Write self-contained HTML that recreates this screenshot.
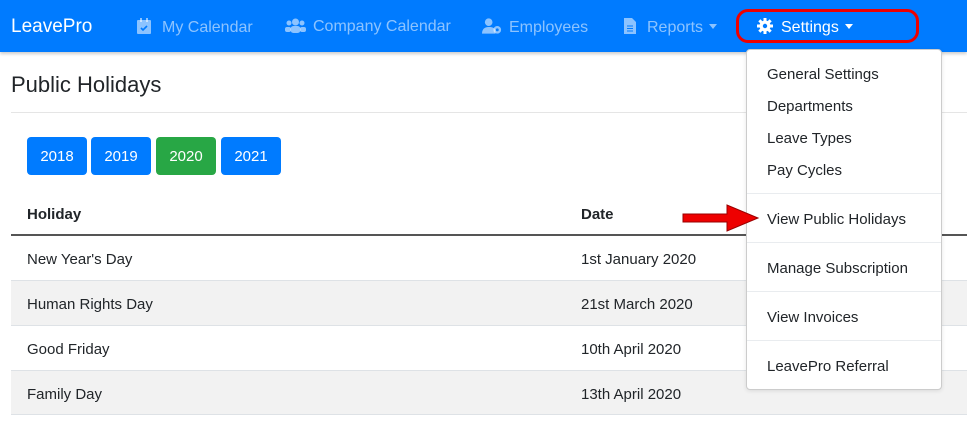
<!DOCTYPE html>
<html><head><style>
*{box-sizing:border-box;margin:0;padding:0}
body{width:967px;height:428px;overflow:hidden;background:#fff;font-family:"Liberation Sans",sans-serif;color:#212529;position:relative;font-size:15px}
.nav{position:absolute;left:0;top:0;width:967px;height:52px;background:#007bff;box-shadow:0 2px 3px rgba(0,0,0,.2)}
.nav span{position:absolute;top:18px;font-size:16px;color:rgba(255,255,255,.55);white-space:nowrap}
.brand{color:#fff!important;font-size:19px!important;top:16px!important;left:11px}
.caret{display:inline-block;border-left:4px solid transparent;border-right:4px solid transparent;border-top:5px solid currentColor;vertical-align:3px;margin-left:6px}
.oval{position:absolute;left:736px;top:9px;width:183px;height:34px;border:3px solid #e00;border-radius:12px}
h1{position:absolute;left:11px;top:72px;font-size:22px;font-weight:normal}
.hr{position:absolute;left:11px;right:0;top:112px;border-top:1px solid #e5e5e5}
.btn{position:absolute;top:137px;width:60px;height:38px;background:#007bff;color:#fff;border-radius:4px;text-align:center;line-height:40px;font-size:15px}
.row{position:absolute;left:11px;width:956px;height:45px;border-top:1px solid #dee2e6}
.row span{position:absolute;top:15px}
.menu{position:absolute;left:746px;top:49px;width:196px;height:341px;background:#fff;border:1px solid #ccc;border-radius:4px;box-shadow:0 1px 4px rgba(0,0,0,.1)}
.menu div{position:absolute;left:20px;font-size:15px;color:#212529;white-space:nowrap}
.menu hr{position:absolute;left:0;right:0;border:0;border-top:1px solid #e9ecef}
</style></head><body>
<div class="nav">
<span class="brand">LeavePro</span>
<span style="left:137px"><svg width="14" height="16" viewBox="0 0 14 16" style="vertical-align:-2px;margin-right:11px"><rect x="0" y="2" width="14" height="14" rx="1" fill="rgba(255,255,255,.55)"/><rect x="3" y="0" width="2" height="4" fill="rgba(255,255,255,.55)"/><rect x="9" y="0" width="2" height="4" fill="rgba(255,255,255,.55)"/><path d="M4 10l2 2 4-4" stroke="#007bff" stroke-width="1.6" fill="none"/></svg>My Calendar</span>
<span style="left:285px"><svg width="21" height="15" viewBox="0 0 21 15" style="vertical-align:-2px;margin-right:7px"><g fill="rgba(255,255,255,.55)"><circle cx="10.5" cy="4" r="3.5"/><circle cx="4" cy="5" r="2.5"/><circle cx="17" cy="5" r="2.5"/><rect x="5.5" y="8" width="10" height="7" rx="3"/><rect x="0" y="9" width="6" height="5" rx="2"/><rect x="15" y="9" width="6" height="5" rx="2"/></g></svg>Company Calendar</span>
<span style="left:482px"><svg width="21" height="16" viewBox="0 0 22 16" style="vertical-align:-2px;margin-right:6px"><g fill="rgba(255,255,255,.55)"><circle cx="7" cy="4" r="4"/><path d="M0 16c0-5 3-7 7-7s6 1 7 3v4z"/><circle cx="16" cy="12" r="4"/></g><circle cx="16" cy="12" r="1.5" fill="#007bff"/></svg>Employees</span>
<span style="left:624px"><svg width="12" height="16" viewBox="0 0 12 16" style="vertical-align:-2px;margin-right:11px"><path d="M0 0h8l4 4v12H0z" fill="rgba(255,255,255,.55)"/><path d="M3 8h6M3 10.5h6M3 13h6" stroke="#007bff" stroke-width="1"/></svg>Reports<i class="caret"></i></span>
<span style="left:757px;color:#fff"><svg width="16" height="16" viewBox="0 0 16 16" style="vertical-align:-2px;margin-right:8px"><g fill="#fff"><circle cx="8" cy="8" r="5.5"/><rect x="6.5" y="0" width="3" height="16"/><rect x="0" y="6.5" width="16" height="3"/><rect x="6.5" y="0" width="3" height="16" transform="rotate(45 8 8)"/><rect x="6.5" y="0" width="3" height="16" transform="rotate(-45 8 8)"/></g><circle cx="8" cy="8" r="2.2" fill="#007bff"/></svg>Settings<i class="caret"></i></span>
<div class="oval"></div>
</div>
<h1>Public Holidays</h1>
<div class="hr"></div>
<div class="btn" style="left:27px">2018</div>
<div class="btn" style="left:91px">2019</div>
<div class="btn" style="left:156px;background:#28a745">2020</div>
<div class="btn" style="left:221px">2021</div>
<div style="position:absolute;left:27px;top:206px;font-weight:bold">Holiday</div>
<div style="position:absolute;left:581px;top:206px;font-weight:bold">Date</div>
<div style="position:absolute;left:11px;width:956px;top:234px;border-top:2px solid #555"></div>
<div class="row" style="top:236px;border-top:0"><span style="left:16px">New Year's Day</span><span style="left:570px">1st January 2020</span></div>
<div class="row" style="top:280px;background:#f2f2f2"><span style="left:16px">Human Rights Day</span><span style="left:570px">21st March 2020</span></div>
<div class="row" style="top:325px"><span style="left:16px">Good Friday</span><span style="left:570px">10th April 2020</span></div>
<div class="row" style="top:370px;background:#f2f2f2;border-bottom:1px solid #dee2e6"><span style="left:16px">Family Day</span><span style="left:570px">13th April 2020</span></div>
<div class="menu">
<div style="top:16px">General Settings</div>
<div style="top:48px">Departments</div>
<div style="top:80px">Leave Types</div>
<div style="top:112px">Pay Cycles</div>
<hr style="top:143px">
<div style="top:161px">View Public Holidays</div>
<hr style="top:192px">
<div style="top:210px">Manage Subscription</div>
<hr style="top:241px">
<div style="top:259px">View Invoices</div>
<hr style="top:290px">
<div style="top:308px">LeavePro Referral</div>
</div>
<svg style="position:absolute;left:682px;top:204px" width="78" height="28" viewBox="0 0 78 28"><path d="M1 10h44V1l31 13-31 13v-9H1z" fill="#e00" stroke="#900" stroke-width="1"/></svg>
</body></html>
